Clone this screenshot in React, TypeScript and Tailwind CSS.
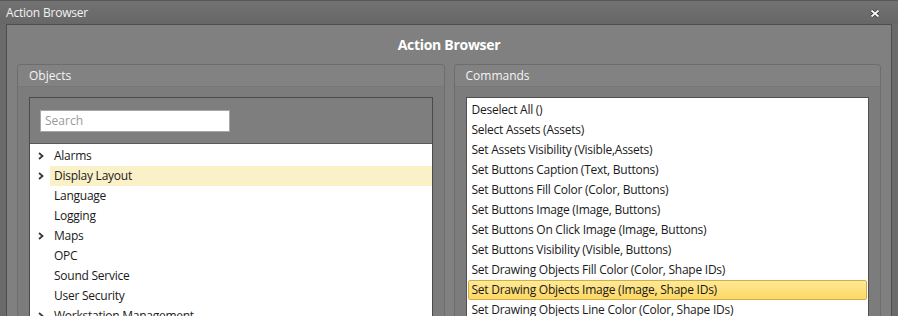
import React from 'react';

const objects = [
  { name: 'Alarms', kids: true },
  { name: 'Display Layout', kids: true, hover: true },
  { name: 'Language' },
  { name: 'Logging' },
  { name: 'Maps', kids: true },
  { name: 'OPC' },
  { name: 'Sound Service' },
  { name: 'User Security' },
  { name: 'Workstation Management', kids: true },
];

const commands = [
  'Deselect All ()',
  'Select Assets (Assets)',
  'Set Assets Visibility (Visible,Assets)',
  'Set Buttons Caption (Text, Buttons)',
  'Set Buttons Fill Color (Color, Buttons)',
  'Set Buttons Image (Image, Buttons)',
  'Set Buttons On Click Image (Image, Buttons)',
  'Set Buttons Visibility (Visible, Buttons)',
  'Set Drawing Objects Fill Color (Color, Shape IDs)',
  'Set Drawing Objects Image (Image, Shape IDs)',
  'Set Drawing Objects Line Color (Color, Shape IDs)',
];

const Chevron = () => (
  <svg width="6" height="8" viewBox="0 0 6 8" className="shrink-0">
    <path d="M1 1 L4.5 4 L1 7" fill="none" stroke="#3a3a3a" strokeWidth="1.8" />
  </svg>
);

const Panel: React.FC<{ title: string; children: React.ReactNode }> = ({ title, children }) => (
  <div className="flex-1 flex flex-col rounded-t-[4px] border border-b-0 border-[#6d6d6d] bg-[#7c7c7c] overflow-hidden">
    <div className="h-[22px] shrink-0 flex items-center px-[11px] text-[12px] text-[#f4f4f4] bg-[#828282] border-b border-[#777777]">
      {title}
    </div>
    <div className="flex-1 px-[11px] pt-[10px] flex flex-col">{children}</div>
  </div>
);

export default function App() {
  return (
    <div className="w-[898px] h-[316px] overflow-hidden flex flex-col bg-[#6a6a6a] font-['Open_Sans',sans-serif] select-none">
      {/* title bar */}
      <div className="h-[24px] shrink-0 flex items-center justify-between pl-[6px] pr-[18px] pt-[1px] bg-gradient-to-b from-[#727272] to-[#676767] border-t border-[#585858]">
        <span className="text-[12px] text-[#f2f2f2] tracking-[-0.2px]">Action Browser</span>
        <svg width="10" height="9" viewBox="0 0 10 9">
          <path d="M1.5 1.5 L8.5 7.5 M8.5 1.5 L1.5 7.5" stroke="#2e2e2e" strokeWidth="3.4" />
          <path d="M1.5 1.5 L8.5 7.5 M8.5 1.5 L1.5 7.5" stroke="#f4f4f4" strokeWidth="2" />
        </svg>
      </div>

      {/* frame */}
      <div className="flex-1 ml-[6px] mr-[6px] border border-b-0 border-[#4e4e4e] bg-[#808080] flex flex-col min-h-0">
        <div className="h-[39px] shrink-0 flex items-center justify-center text-[14px] font-bold text-white tracking-[-0.3px]">
          Action Browser
        </div>

        <div className="flex-1 flex gap-[9px] px-[10px] min-h-0">
          <Panel title="Objects">
            <div className="flex-1 flex flex-col border border-b-0 border-[#4b4b4b] bg-[#7e7e7e]">
              <div className="pt-[12px] pb-[11px] px-[10px] border-b border-[#5a5a5a]">
                <div className="w-[190px] h-[22px] bg-white border border-[#a6a6a6] flex items-center px-[4px] text-[12px] text-[#9a9a9a]">
                  Search
                </div>
              </div>
              <div className="flex-1 bg-white pt-[2px]">
                {objects.map((o) => (
                  <div key={o.name} className="h-[20px] flex items-center text-[12px] text-[#1a1a1a] tracking-[-0.25px]">
                    <div className="w-[20px] pl-[8px] flex items-center">{o.kids && <Chevron />}</div>
                    <div className={`flex-1 h-full flex items-center pl-[4px] ${o.hover ? 'bg-[#fbf1c9]' : ''}`}>
                      {o.name}
                    </div>
                  </div>
                ))}
              </div>
            </div>
          </Panel>

          <Panel title="Commands">
            <div className="flex-1 border border-b-0 border-[#505050] bg-white pt-[2px] px-[1px]">
              {commands.map((c, i) => (
                <div
                  key={c}
                  className={`h-[20px] flex items-center pl-[3px] text-[12px] text-[#1a1a1a] tracking-[-0.25px] border rounded-[2px] ${
                    i === 9
                      ? 'border-[#d2ae4a] bg-gradient-to-b from-[#ffe995] to-[#fdd862]'
                      : 'border-transparent'
                  }`}
                >
                  {c}
                </div>
              ))}
            </div>
          </Panel>
        </div>
      </div>
    </div>
  );
}
